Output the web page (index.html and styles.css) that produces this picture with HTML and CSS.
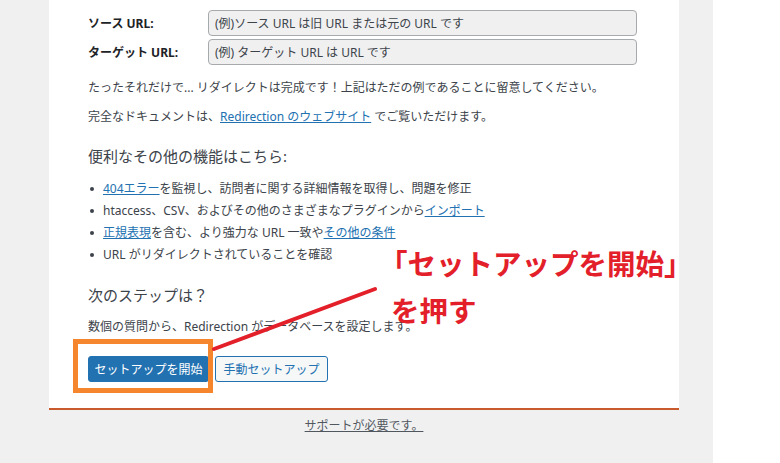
FILE: index.html
```html
<!DOCTYPE html>
<html lang="ja">
<head>
<meta charset="utf-8">
<title>Redirection</title>
<link rel="stylesheet" href="styles.css">
</head>
<body>
<div class="page">
  <div class="main">
    <div class="card">
      <div class="form-row">
        <label class="form-label">ソース URL:</label>
        <input class="form-input" type="text" readonly value="(例)ソース URL は旧 URL または元の URL です">
      </div>
      <div class="form-row">
        <label class="form-label">ターゲット URL:</label>
        <input class="form-input" type="text" readonly value="(例) ターゲット URL は URL です">
      </div>
      <p class="text first">たったそれだけで... リダイレクトは完成です！上記はただの例であることに留意してください。</p>
      <p class="text">完全なドキュメントは、<a href="#">Redirection のウェブサイト</a> でご覧いただけます。</p>
      <h2 class="heading">便利なその他の機能はこちら:</h2>
      <ul class="features">
        <li><a href="#">404エラー</a>を監視し、訪問者に関する詳細情報を取得し、問題を修正</li>
        <li>htaccess、CSV、およびその他のさまざまなプラグインから<a href="#">インポート</a></li>
        <li><a href="#">正規表現</a>を含む、より強力な URL 一致や<a href="#">その他の条件</a></li>
        <li>URL がリダイレクトされていることを確認</li>
      </ul>
      <h2 class="heading next">次のステップは？</h2>
      <p class="text">数個の質問から、Redirection がデータベースを設定します。</p>
      <div class="actions">
        <button class="btn primary">セットアップを開始</button>
        <button class="btn secondary">手動セットアップ</button>
      </div>
    </div>
    <div class="support"><a href="#">サポートが必要です。</a></div>
  </div>
  <div class="side"></div>
</div>

<svg class="markup" width="780" height="463" viewBox="0 0 780 463" xmlns="http://www.w3.org/2000/svg">
  <rect x="75.5" y="341.5" width="135" height="49" fill="none" stroke="#f5862d" stroke-width="5"/>
  <line x1="214" y1="349" x2="375" y2="289" stroke="#e3202a" stroke-width="4" stroke-linecap="round"/>
</svg>
<div class="note">
  <div class="note-line">「セットアップを開始」</div>
  <div class="note-line indent">を押す</div>
</div>
</body>
</html>
```

FILE: styles.css
```css
html, body {
  margin: 0;
  padding: 0;
}
body {
  width: 780px;
  height: 463px;
  overflow: hidden;
  position: relative;
  font-family: "Noto Sans", "Noto Sans CJK JP", sans-serif;
  color: #3c434a;
  background: #ffffff;
}
.page {
  display: flex;
  height: 463px;
}
.main {
  width: 713px;
  background: #f0f0f1;
}
.side {
  flex: 1;
  background: #ffffff;
}
.card {
  margin-left: 49px;
  width: 630px;
  box-sizing: border-box;
  background: #ffffff;
  padding: 10px 0 26px 39px;
  border-bottom: 2px solid #c95a2e;
}
.form-row {
  display: flex;
  align-items: center;
  height: 26px;
  margin-bottom: 3px;
}
.form-label {
  width: 120px;
  font-size: 12px;
  font-weight: 700;
  color: #1d2327;
}
.form-input {
  width: 429px;
  height: 26px;
  box-sizing: border-box;
  border: 1px solid #a7aaad;
  border-radius: 4px;
  background: #f0f0f1;
  padding: 0 6px;
  font-family: "Noto Sans", "Noto Sans CJK JP", sans-serif;
  font-size: 12px;
  color: #3c434a;
  outline: none;
}
.text {
  margin: 0 0 11px;
  font-size: 12px;
  line-height: 18px;
}
.text.first {
  margin-top: 14px;
}
a {
  color: #2271b1;
  text-decoration: underline;
}
.heading {
  margin: 20px 0 12px;
  font-size: 15px;
  line-height: 20px;
  font-weight: 400;
  color: #3c434a;
}
.heading.next {
  margin: 19px 0 13px;
}
.features {
  list-style: none;
  margin: 0;
  padding: 0 0 0 2px;
}
.features li {
  display: flex;
  align-items: center;
  font-size: 12px;
  line-height: 22px;
}
.features li::before {
  content: "";
  width: 4px;
  height: 4px;
  border-radius: 50%;
  background: #3c434a;
  margin-right: 9px;
  flex: none;
}
.actions {
  display: flex;
  gap: 6px;
  margin-top: 20px;
}
.btn {
  height: 26px;
  box-sizing: border-box;
  border-radius: 3px;
  padding: 0;
  white-space: nowrap;
  font-family: "Noto Sans", "Noto Sans CJK JP", sans-serif;
  font-size: 12px;
  border: 1px solid #2271b1;
}
.btn.primary {
  width: 121px;
  background: #2271b1;
  color: #ffffff;
}
.btn.secondary {
  width: 113px;
  background: #f6f7f7;
  color: #2271b1;
}
.support {
  width: 630px;
  margin-left: 49px;
  margin-top: 7px;
  text-align: center;
  font-size: 12px;
  line-height: 18px;
}
.support a {
  color: #50575e;
}
.markup {
  position: absolute;
  left: 0;
  top: 0;
  pointer-events: none;
}
.note {
  position: absolute;
  left: 379px;
  top: 239px;
  font-family: "Noto Sans CJK JP", sans-serif;
  font-weight: 700;
  font-size: 28.5px;
  line-height: 47px;
  color: #e3202a;
  white-space: nowrap;
}
.note-line.indent {
  padding-left: 12px;
}
```
